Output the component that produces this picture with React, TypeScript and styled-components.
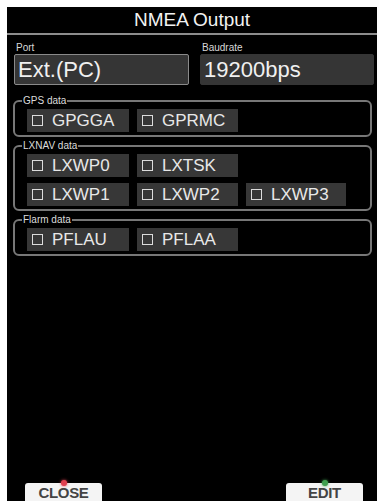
import React from "react";
import styled, { createGlobalStyle } from "styled-components";

const Global = createGlobalStyle`
  html, body { margin: 0; padding: 0; background: #fdfdfd; }
  body { padding: 7px 2px 0 7px; font-family: "Liberation Sans", Arial, sans-serif; }
  * { box-sizing: border-box; }
`;

const Panel = styled.div`
  width: 370px;
  height: 494px;
  background: #000;
  color: #ececec;
  display: flex;
  flex-direction: column;
`;

const Title = styled.div`
  height: 28px;
  border-bottom: 2px solid #8c8c8c;
  display: flex;
  align-items: center;
  justify-content: center;
  font-size: 19px;
  color: #f2f2f2;
  padding-bottom: 1px;
`;

const FieldRow = styled.div`
  display: grid;
  grid-template-columns: 175px 174px;
  column-gap: 11px;
  padding: 7px 0 0 7px;
`;

const FieldCol = styled.div`
  display: flex;
  flex-direction: column;
  gap: 1px;
`;

const SmallLabel = styled.div`
  font-size: 10px;
  line-height: 11px;
  height: 11px;
  color: #d8d8d8;
  padding-left: 2px;
`;

const Field = styled.div<{ $focused?: boolean }>`
  height: 31px;
  background: #353535;
  border: 1px solid ${(p) => (p.$focused ? "#8a8a8a" : "#353535")};
  border-radius: 2px;
  font-size: 22px;
  line-height: 29px;
  padding-left: 3px;
  color: #f0f0f0;
`;

const Groups = styled.div`
  display: flex;
  flex-direction: column;
  gap: 3px;
  padding: 10px 5px 0 6px;
`;

const Group = styled.fieldset`
  margin: 0;
  border: 2px solid #777;
  border-radius: 6px;
  padding: 2px 12px 3px 12px;
  min-width: 0;
`;

const Legend = styled.legend`
  font-size: 10px;
  line-height: 12px;
  color: #dcdcdc;
  padding: 0 1px;
  margin-left: -5px;
`;

const ButtonGrid = styled.div`
  display: grid;
  grid-template-columns: 102px 101px 100px;
  column-gap: 8px;
  row-gap: 6px;
`;

const Toggle = styled.div`
  height: 23px;
  background: #373737;
  display: flex;
  align-items: center;
  padding-left: 5px;
  font-size: 17px;
  color: #e8e8e8;
  gap: 9px;
`;

const Box = styled.span`
  width: 11px;
  height: 11px;
  border: 1.5px solid #dcdcdc;
  display: inline-block;
  flex: none;
`;

const Spacer = styled.div`
  flex: 1;
`;

const Footer = styled.div`
  display: flex;
  justify-content: space-between;
  align-items: flex-end;
  padding: 0 14px 0 18px;
`;

const SoftKey = styled.div`
  position: relative;
  width: 77px;
  height: 18px;
  background: #f4f4f4;
  border-radius: 3px 3px 0 0;
  color: #444;
  font-size: 15px;
  font-weight: bold;
  display: flex;
  justify-content: center;
  align-items: flex-end;
  line-height: 17px;
  letter-spacing: -0.3px;
`;

const Dot = styled.span<{ $color: string }>`
  position: absolute;
  top: -3px;
  left: 50%;
  margin-left: -3px;
  width: 6px;
  height: 6px;
  border-radius: 50%;
  background: ${(p) => p.$color};
  box-shadow: 0 0 3px ${(p) => p.$color};
`;

const ToggleItem = ({ label }: { label: string }) => (
  <Toggle>
    <Box />
    <span>{label}</span>
  </Toggle>
);

export default function App() {
  return (
    <>
      <Global />
      <Panel>
        <Title>NMEA Output</Title>
        <FieldRow>
          <FieldCol>
            <SmallLabel>Port</SmallLabel>
            <Field $focused>Ext.(PC)</Field>
          </FieldCol>
          <FieldCol>
            <SmallLabel>Baudrate</SmallLabel>
            <Field>19200bps</Field>
          </FieldCol>
        </FieldRow>
        <Groups>
          <Group>
            <Legend>GPS data</Legend>
            <ButtonGrid>
              <ToggleItem label="GPGGA" />
              <ToggleItem label="GPRMC" />
            </ButtonGrid>
          </Group>
          <Group>
            <Legend>LXNAV data</Legend>
            <ButtonGrid>
              <ToggleItem label="LXWP0" />
              <ToggleItem label="LXTSK" />
              <span />
              <ToggleItem label="LXWP1" />
              <ToggleItem label="LXWP2" />
              <ToggleItem label="LXWP3" />
            </ButtonGrid>
          </Group>
          <Group>
            <Legend>Flarm data</Legend>
            <ButtonGrid>
              <ToggleItem label="PFLAU" />
              <ToggleItem label="PFLAA" />
            </ButtonGrid>
          </Group>
        </Groups>
        <Spacer />
        <Footer>
          <SoftKey>
            <Dot $color="#e04050" />
            CLOSE
          </SoftKey>
          <SoftKey>
            <Dot $color="#40a050" />
            EDIT
          </SoftKey>
        </Footer>
      </Panel>
    </>
  );
}
